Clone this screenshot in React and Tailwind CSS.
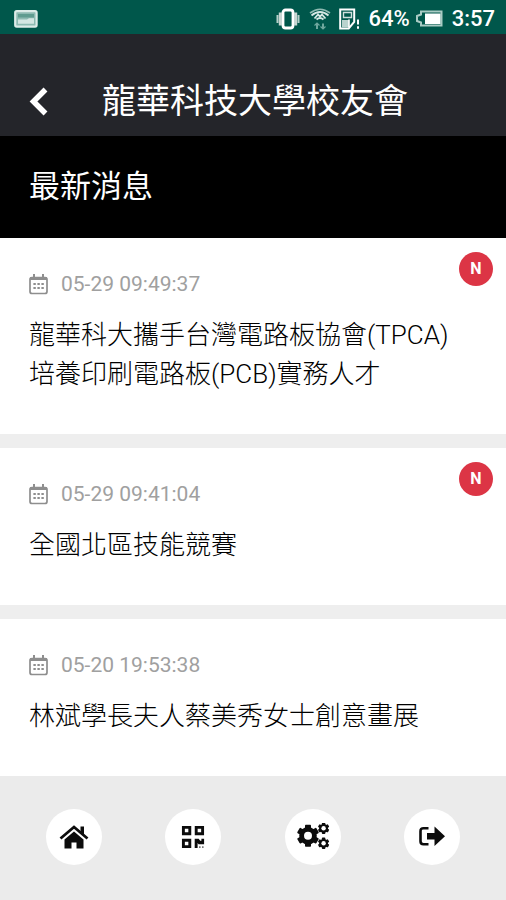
import React from "react";

const font = "font-['Roboto','Noto_Sans_CJK_TC',sans-serif]";

function CalendarIcon() {
  return (
    <svg className="h-[24px] w-[20px] shrink-0" viewBox="0 0 20 24" fill="none" stroke="#8e8e8e" aria-hidden="true">
      <rect x="1" y="4.500" width="17" height="16" rx="2" strokeWidth="1.700" />
      <path d="M1 5.500h17" strokeWidth="3" />
      <path d="M5 1v4M14 1v4" strokeWidth="2" />
      <path d="M4.400 11h2.400M8.400 11h2.400M12.400 11h2.400M4.400 15h2.400M8.400 15h2.400M12.400 15h2.400" strokeWidth="2" />
    </svg>
  );
}

function StatusBar() {
  return (
    <div className="flex h-[34px] items-center bg-[#00574b] pl-[14px] pr-[11px] pt-[3px] text-white">
      <svg className="h-[18px] w-[24px]" viewBox="0 0 24 18" aria-hidden="true">
        <rect x="1.200" y="1.200" width="21.400" height="15.400" rx="1.500" fill="#8dbab2" stroke="#dcebe8" strokeWidth="2.200" />
        <path d="M4 4h16v3.500H4z" fill="#5f9c90" />
        <path d="M4 9.500h9l2-1.200h5v5.500H4z" fill="#d3e6e2" />
      </svg>
      <div className="ml-auto flex items-center">
        <svg className="h-[22px] w-[24px]" viewBox="0 0 24 22" fill="none" aria-hidden="true">
          <path d="M1.500 7v8M22.500 7v8" strokeWidth="2" stroke="#b5cfca" />
          <path d="M4.300 4.500v13M19.700 4.500v13" strokeWidth="3" stroke="#c9d6d3" />
          <rect x="7" y="2" width="10" height="18" rx="2.500" strokeWidth="2.800" stroke="#fff" />
        </svg>
        <svg className="ml-[9px] h-[24px] w-[22px]" viewBox="0 0 22 24" fill="none" stroke="#d7e8e5" aria-hidden="true">
          <path d="M1 6Q11-1.500 21 6" strokeWidth="1.600" stroke="#8fbab2" />
          <path d="M2.500 8.500q8.500-7 17 0M5.500 11.500 9 7.500l2 2 2-2 3.500 4M7.500 12.500q3.500-3 7 0" strokeWidth="1.800" />
          <path d="M8 22v-5M14 16.500v5" stroke="#6fa79d" strokeWidth="2" />
          <path d="M5.500 18.500 8 16l2.500 2.500M11.500 19.500 14 22l2.500-2.500" stroke="#6fa79d" strokeWidth="1.200" />
        </svg>
        <svg className="ml-[7px] h-[22px] w-[22px]" viewBox="0 0 22 22" fill="none" stroke="#fff" aria-hidden="true">
          <path d="M2.200 1.500h14v12.500l-5.500 6.500H2.200z" strokeWidth="2" />
          <path d="M5.500 4.500h8v5h-8z" stroke="#cfe0dd" strokeWidth="1.400" />
          <path d="M4 12h7v7.500H4z" fill="#b9d3ce" stroke="none" />
          <path d="M11 11.500v8" strokeWidth="1.600" />
          <path d="M20 11.500v5M20 18.200v2.500" strokeWidth="2" />
        </svg>
        <span className="ml-[8px] text-[22px] font-medium leading-none">64%</span>
        <svg className="ml-[5px] h-[18px] w-[28px]" viewBox="0 0 28 18" aria-hidden="true">
          <path d="M6 1.500h20.500v14H6v-3L2 11V6l4-1.500z" fill="none" stroke="#a9cbc4" strokeWidth="2" />
          <path d="M10 3.500h15.500v10.500H10z" fill="#fff" />
        </svg>
        <span className="ml-[9px] text-[22px] font-medium leading-none">3:57</span>
      </div>
    </div>
  );
}

function HomeIcon() {
  return (
    <svg className="h-[26px] w-[30px]" viewBox="0 0 30 26" aria-hidden="true">
      <path d="M1.500 14.500 15 3l13.500 11.500" fill="none" stroke="#0c0c0c" strokeWidth="2.800" />
      <path d="M21.500 2.500h3.500v9l-3.500-3z" fill="#0c0c0c" />
      <path d="M15 7.500 24.500 15.500V24.500h-7v-6h-5v6h-7v-9z" fill="#0c0c0c" />
    </svg>
  );
}

function QrIcon() {
  return (
    <svg className="size-[24px]" viewBox="0 0 24 24" aria-hidden="true">
      <path d="M2.400 2.400h6.400v6.400H2.400zM15.200 2.400h6.400v6.400h-6.400zM2.400 15.200h6.400v6.400H2.400z" fill="none" stroke="#0c0c0c" strokeWidth="2.900" />
      <path d="M13.700 13.700h4l1.500 2h1.200v-2h2.700v5.500h-5.500l-1-1.200v5.100h-2.900z" fill="#0c0c0c" />
      <path d="M18 21.300h1.600v1.600H18zM21 21.300h1.600v1.600H21z" fill="#777" />
    </svg>
  );
}

function Gear({ x, y, body, tooth, reach, hole }) {
  return (
    <g transform={`translate(${x} ${y})`}>
      <circle r={body} fill="#0c0c0c" />
      {[0, 60, 120].map((a) => (
        <rect key={a} x={-tooth / 2} y={-reach} width={tooth} height={reach * 2} rx="0.8" transform={`rotate(${a})`} fill="#0c0c0c" />
      ))}
      <circle r={hole} fill="#fff" />
    </g>
  );
}

function GearsIcon() {
  return (
    <svg className="h-[28px] w-[36px]" viewBox="0 0 36 28" aria-hidden="true">
      <Gear x={13} y={12.7} body={8.8} tooth={6} reach={11} hole={4} />
      <Gear x={28.6} y={5.3} body={4.4} tooth={3.4} reach={5.7} hole={2.2} />
      <Gear x={28.6} y={20.3} body={4.4} tooth={3.4} reach={5.7} hole={2.2} />
    </svg>
  );
}

function ExitIcon() {
  return (
    <svg className="h-[22px] w-[28px]" viewBox="0 0 28 22" aria-hidden="true">
      <path d="M10.500 2.200H5.500q-3 0-3 3v10q0 3 3 3h5" fill="none" stroke="#0c0c0c" strokeWidth="2.600" />
      <path d="M9 7h7.500V.5L27 10.200 16.500 20v-6.500H9z" fill="#0c0c0c" />
    </svg>
  );
}

const news = [
  { date: "05-29 09:49:37", lines: ["龍華科大攜手台灣電路板協會(TPCA)", "培養印刷電路板(PCB)實務人才"], isNew: true },
  { date: "05-29 09:41:04", lines: ["全國北區技能競賽"], isNew: true },
  { date: "05-20 19:53:38", lines: ["林斌學長夫人蔡美秀女士創意畫展"], isNew: false },
];

const nav = [
  { label: "首頁", icon: <HomeIcon /> },
  { label: "QR", icon: <QrIcon /> },
  { label: "設定", icon: <GearsIcon /> },
  { label: "登出", icon: <ExitIcon /> },
];

export default function App() {
  return (
    <div className={`${font} flex min-h-screen flex-col bg-[#ebebeb]`}>
      <StatusBar />
      <header className="flex h-[102px] items-end bg-[#24252a] pb-[10px] pl-[29px] text-white">
        <button type="button" aria-label="返回" className="flex h-[50px] w-[73px] items-center">
          <svg className="h-[30px] w-[20px]" viewBox="0 0 20 30" fill="none" aria-hidden="true">
            <path d="M16.500 3.500 4.500 15.500 16.500 27.500" stroke="#fff" strokeWidth="5.500" />
          </svg>
        </button>
        <h1 className="text-[34px] leading-[50px]">龍華科技大學校友會</h1>
      </header>
      <h2 className="bg-black px-[29px] text-[31px] leading-[102px] text-white">最新消息</h2>
      <main className="flex flex-col gap-[14px] bg-[#eeeeee]">
        {news.map((n) => (
          <article key={n.date} className="relative bg-white px-[29px] pb-10 pt-8">
            <div className="mb-4 flex h-[30px] items-center gap-3 text-[21px] text-[#a0a0a0]">
              <CalendarIcon />
              <time>{n.date}</time>
            </div>
            <a href="#" className="block text-[26px] font-light leading-[39px] text-black">
              {n.lines.map((l) => (
                <span key={l} className="block">{l}</span>
              ))}
            </a>
            {n.isNew && (
              <span className="absolute right-[13px] top-[14px] flex size-[34px] items-center justify-center rounded-full bg-[#dc3545] text-[16px] font-bold text-white">
                N
              </span>
            )}
          </article>
        ))}
      </main>
      <nav className="flex justify-between px-[46px] pt-[33px]">
        {nav.map((n) => (
          <button key={n.label} type="button" aria-label={n.label} className="flex size-[56px] items-center justify-center rounded-full bg-white text-[#0c0c0c]">
            {n.icon}
          </button>
        ))}
      </nav>
    </div>
  );
}
